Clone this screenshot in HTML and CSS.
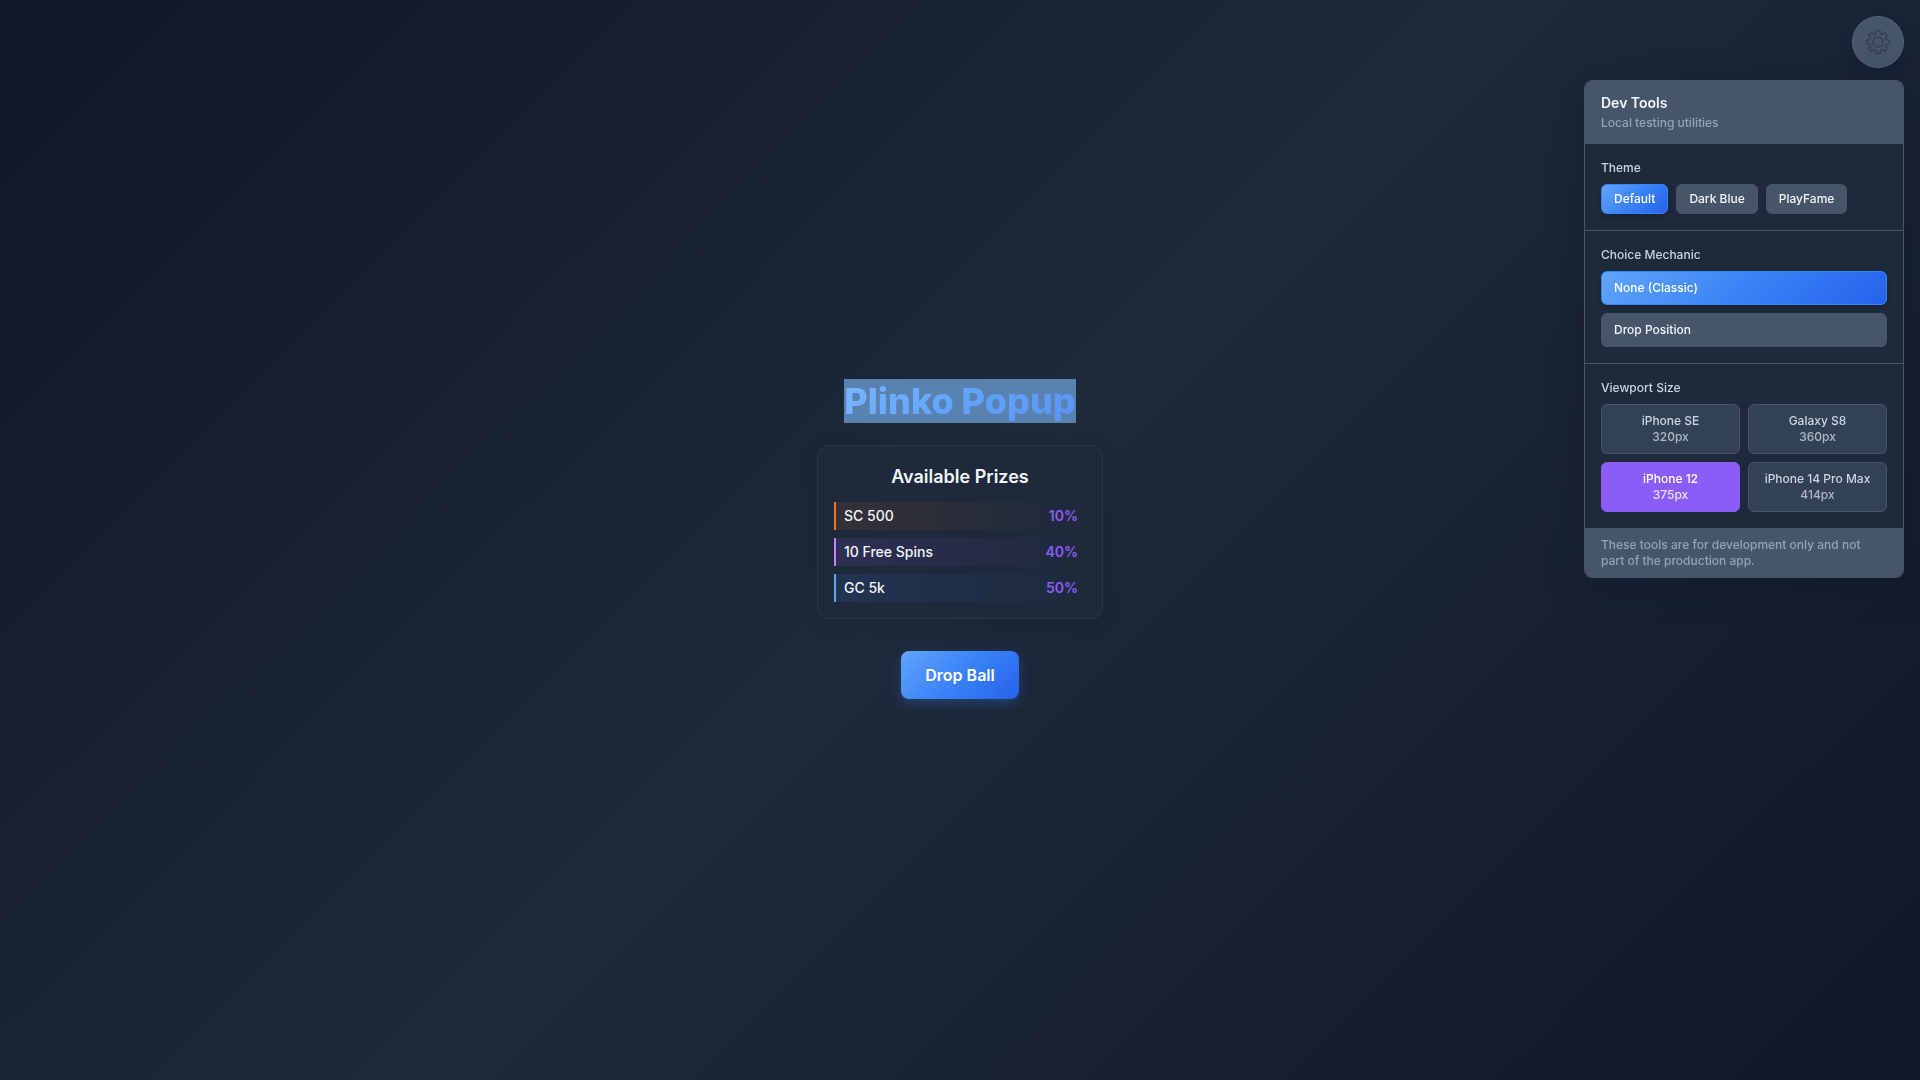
FILE: index.html
```html
<!DOCTYPE html>
<html lang="en">
<head>
<meta charset="utf-8">
<meta name="viewport" content="width=device-width, initial-scale=1">
<title>Plinko Popup</title>
<link rel="stylesheet" href="styles.css">
</head>
<body>
<main class="stage">
  <h1 class="title"><span class="title-mark"><span class="title-text">Plinko Popup</span></span></h1>
  <section class="prizes">
    <h2 class="prizes-title">Available Prizes</h2>
    <ul class="prize-list">
      <li class="prize prize-sc"><span>SC 500</span><span class="odds">10%</span></li>
      <li class="prize prize-spins"><span>10 Free Spins</span><span class="odds">40%</span></li>
      <li class="prize prize-gc"><span>GC 5k</span><span class="odds">50%</span></li>
    </ul>
  </section>
  <button class="drop" type="button">Drop Ball</button>
</main>

<aside class="dev">
  <button class="dev-toggle" type="button" aria-label="Toggle dev tools">
    <svg class="gear" viewBox="-13 -13 26 26" fill="none" stroke="currentColor" stroke-width="2" stroke-linecap="round" stroke-linejoin="round" aria-hidden="true">
      <path d="M-2.6-8.2L-1.9-11.2H1.9L2.6-8.2L3.96-7.64L6.58-9.26L9.26-6.58L7.64-3.96L8.2-2.6L11.2-1.9V1.9L8.2 2.6L7.64 3.96L9.26 6.58L6.58 9.26L3.96 7.64L2.6 8.2L1.9 11.2H-1.9L-2.6 8.2L-3.96 7.64L-6.58 9.26L-9.26 6.58L-7.64 3.96L-8.2 2.6L-11.2 1.9V-1.9L-8.2-2.6L-7.64-3.96L-9.26-6.58L-6.58-9.26L-3.96-7.64Z"/>
      <circle r="5"/>
    </svg>
  </button>
  <div class="panel">
    <header class="panel-head">
      <h2 class="panel-title">Dev Tools</h2>
      <p class="panel-sub">Local testing utilities</p>
    </header>
    <section class="group">
      <h3 class="group-label">Theme</h3>
      <div class="themes">
        <button class="btn btn-active" type="button">Default</button>
        <button class="btn" type="button">Dark Blue</button>
        <button class="btn" type="button">PlayFame</button>
      </div>
    </section>
    <section class="group">
      <h3 class="group-label">Choice Mechanic</h3>
      <div class="mechanics">
        <button class="btn btn-wide btn-active" type="button">None (Classic)</button>
        <button class="btn btn-wide" type="button">Drop Position</button>
      </div>
    </section>
    <section class="group">
      <h3 class="group-label">Viewport Size</h3>
      <div class="viewports">
        <button class="device" type="button">iPhone SE<span class="device-size">320px</span></button>
        <button class="device" type="button">Galaxy S8<span class="device-size">360px</span></button>
        <button class="device device-active" type="button">iPhone 12<span class="device-size">375px</span></button>
        <button class="device" type="button">iPhone 14 Pro Max<span class="device-size">414px</span></button>
      </div>
    </section>
    <footer class="panel-foot">These tools are for development only and not part of the production app.</footer>
  </div>
</aside>
</body>
</html>
```
FILE: styles.css
```css
:root {
  --surface: #1e293b;
  --raised: #475569;
  --text: #f1f5f9;
  --muted: #94a3b8;
  --soft: #cbd5e1;
  --primary: linear-gradient(135deg, #60a5fa 0%, #3b82f6 50%, #2563eb 100%);
}

* {
  box-sizing: border-box;
}

body,
h1,
h2,
h3,
p,
ul {
  margin: 0;
  padding: 0;
}

body {
  font-family: Inter, sans-serif;
  font-size: 14px;
  font-weight: 500;
  line-height: 20px;
  color: var(--text);
  -webkit-font-smoothing: antialiased;
}

button {
  font: inherit;
  color: inherit;
  cursor: pointer;
}

.stage {
  display: flex;
  flex-direction: column;
  align-items: center;
  justify-content: center;
  min-height: 100vh;
  padding: 16px;
  background: linear-gradient(135deg, #0f172a 0%, #1e293b 50%, #0f172a 100%);
}

.title {
  margin-bottom: 24px;
  font-size: 36px;
  font-weight: 800;
  line-height: 40px;
}

.title-mark {
  background: #5a82b0;
}

.title-text {
  background: linear-gradient(135deg, #7ab4ff 0%, #60a5fa 50%, #5b93f5 100%);
  -webkit-background-clip: text;
  background-clip: text;
  color: transparent;
}

.prizes {
  width: 100%;
  max-width: 286px;
  margin-bottom: 32px;
  padding: 17px 16px 16px;
  border: 1px solid #2a3648;
  border-radius: 12px;
  background: var(--surface);
  box-shadow: 0 4px 16px rgba(15, 23, 42, 0.2);
}

.prizes-title {
  margin-bottom: 11px;
  font-size: 18px;
  font-weight: 600;
  line-height: 28px;
  text-align: center;
}

.prize-list {
  display: grid;
  gap: 8px;
  list-style: none;
}

.prize {
  display: flex;
  justify-content: space-between;
  padding: 4px 8px;
  border-left: 2px solid;
}

.prize > span {
  color: var(--text);
}

.prize > .odds {
  font-weight: 600;
  color: #8b5cf6;
}

.prize-sc {
  border-color: #f97316;
  background: linear-gradient(90deg, rgba(249, 115, 22, 0.1), rgba(249, 115, 22, 0));
}

.prize-spins {
  border-color: #c084fc;
  background: linear-gradient(90deg, rgba(168, 85, 247, 0.12), rgba(168, 85, 247, 0));
}

.prize-gc {
  border-color: #60a5fa;
  background: linear-gradient(90deg, rgba(59, 130, 246, 0.12), rgba(59, 130, 246, 0));
}

.drop {
  padding: 12px 24px;
  border: 0;
  border-radius: 8px;
  background: var(--primary);
  box-shadow: 0 4px 12px rgba(59, 130, 246, 0.3);
  font-size: 16px;
  font-weight: 600;
  line-height: 24px;
  color: #fff;
}

.dev {
  position: fixed;
  top: 16px;
  right: 16px;
  display: flex;
  flex-direction: column;
  align-items: flex-end;
  gap: 12px;
}

.dev-toggle {
  display: grid;
  place-items: center;
  width: 52px;
  height: 52px;
  padding: 0;
  border: 1px solid #53647b;
  border-radius: 50%;
  background: var(--raised);
  box-shadow: 0 8px 16px rgba(15, 23, 42, 0.3);
  color: #394357;
}

.gear {
  width: 26px;
  height: 26px;
}

.panel {
  width: 320px;
  max-width: 100%;
  overflow: hidden;
  border: 1px solid var(--raised);
  border-radius: 8px;
  background: var(--surface);
  box-shadow: 0 8px 32px rgba(15, 23, 42, 0.5);
  font-size: 12px;
  line-height: 16px;
}

.panel-head {
  display: grid;
  gap: 2px;
  padding: 12px 16px;
  border-bottom: 1px solid var(--raised);
  background: var(--raised);
}

.panel-title {
  font-size: 14px;
  font-weight: 600;
  line-height: 20px;
}

.panel-sub {
  color: var(--muted);
}

.group {
  padding: 16px;
}

.group + .group {
  border-top: 1px solid var(--raised);
}

.group-label {
  margin-bottom: 8px;
  font-size: 12px;
  font-weight: 500;
  color: var(--soft);
}

.themes {
  display: flex;
  flex-wrap: wrap;
  gap: 8px;
}

.mechanics {
  display: grid;
  gap: 8px;
}

.btn {
  padding: 6px 12px;
  border: 1px solid var(--raised);
  border-radius: 6px;
  background: var(--raised);
}

.btn-wide {
  padding: 8px 12px;
  text-align: left;
}

.btn-active {
  border-color: #3b82f6;
  background: var(--primary);
  box-shadow: 0 2px 4px rgba(15, 23, 42, 0.4);
  color: #fff;
}

.viewports {
  display: grid;
  grid-template-columns: 1fr 1fr;
  gap: 8px;
}

.device {
  padding: 8px;
  border: 1px solid var(--raised);
  border-radius: 6px;
  background: #334155;
  color: var(--soft);
}

.device-size {
  display: block;
  opacity: 0.8;
}

.device-active {
  border-color: #8b5cf6;
  background: #8b5cf6;
  color: #fff;
}

.panel-foot {
  padding: 8px 32px 8px 16px;
  border-top: 1px solid var(--raised);
  background: var(--raised);
  color: var(--muted);
}
```
